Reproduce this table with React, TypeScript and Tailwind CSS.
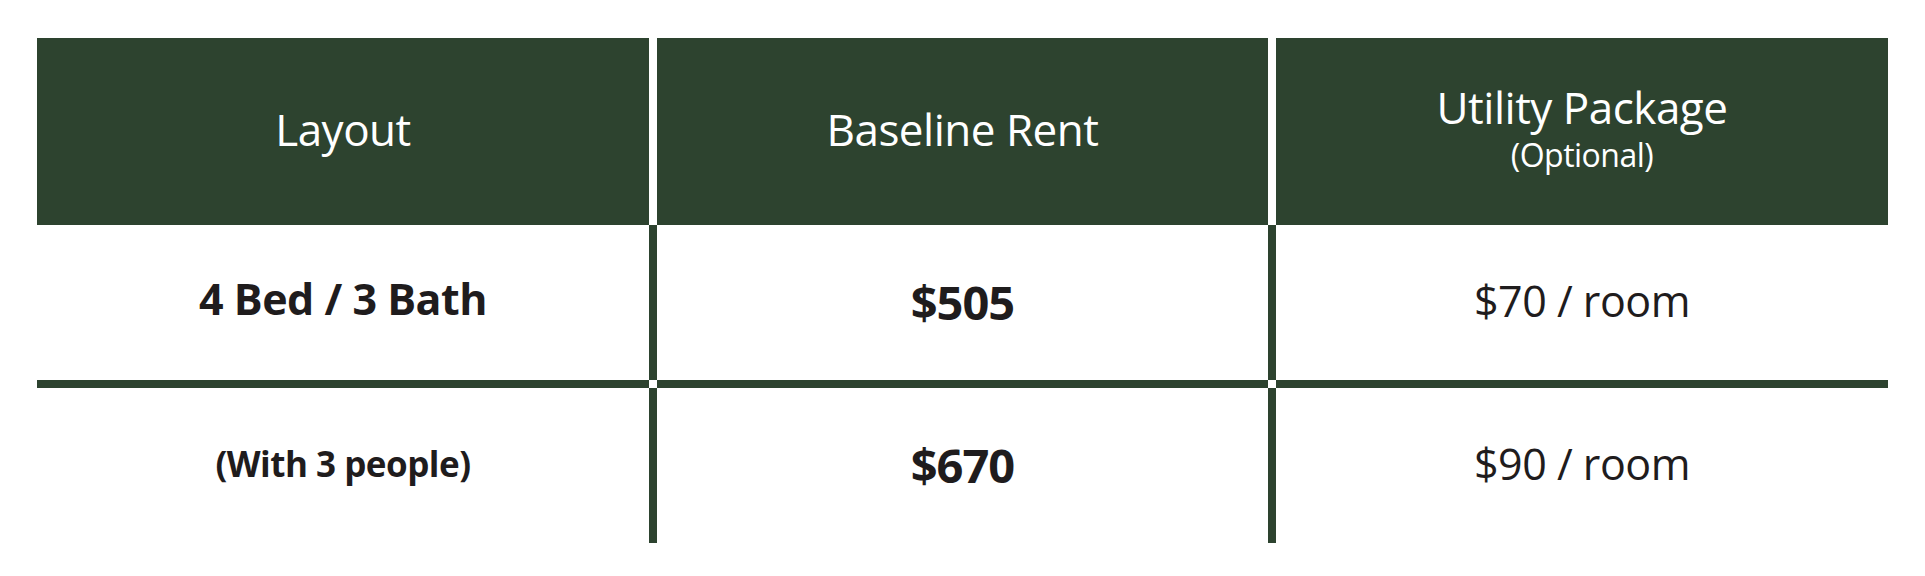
import React from 'react'

const green = 'bg-[#2d432f]'

const rows = [
  { layout: '4 Bed / 3 Bath', layoutSize: 'text-[43px]', rent: '$505', utility: '$70 / room' },
  { layout: '(With 3 people)', layoutSize: 'text-[35px]', rent: '$670', utility: '$90 / room' },
]

const HeaderCell: React.FC<{ children: React.ReactNode }> = ({ children }) => (
  <div className={`${green} text-white flex flex-col items-center justify-center`}>{children}</div>
)

const Cell: React.FC<{ children: React.ReactNode }> = ({ children }) => (
  <div className="flex items-center justify-center text-[#1f1c1d] leading-none">{children}</div>
)

const App: React.FC = () => {
  return (
    <div
      className="w-[1925px] h-[576px] bg-white pt-[38px] pl-[37px]"
      style={{ fontFamily: '"Open Sans", "Noto Sans", sans-serif' }}
    >
      <div className="grid grid-cols-[612px_8px_611px_8px_612px] grid-rows-[187px_155px_8px_155px]">
        {/* header */}
        <HeaderCell>
          <span className="text-[44px] leading-none tracking-[-0.5px] -mt-[6px]">Layout</span>
        </HeaderCell>
        <div />
        <HeaderCell>
          <span className="text-[44px] leading-none tracking-[-0.5px] -mt-[6px]">Baseline Rent</span>
        </HeaderCell>
        <div />
        <HeaderCell>
          <span className="text-[44px] leading-[1.25] tracking-[-0.5px] -mt-[8px]">Utility Package</span>
          <span className="text-[32px] leading-[1.25] tracking-[-0.5px]">(Optional)</span>
        </HeaderCell>

        {rows.map((r, i) => (
          <React.Fragment key={r.rent}>
            {i > 0 && (
              <>
                <div className={green} />
                <div />
                <div className={green} />
                <div />
                <div className={green} />
              </>
            )}
            <Cell>
              <span className={`${r.layoutSize} font-bold tracking-[-0.5px] ${i === 0 ? '-mt-[8px]' : '-mt-[4px]'}`}>
                {r.layout}
              </span>
            </Cell>
            <div className={green} />
            <Cell>
              <span className="text-[47px] font-bold tracking-[-1px]">{r.rent}</span>
            </Cell>
            <div className={green} />
            <Cell>
              <span className="text-[43px] tracking-[-0.5px] -mt-[4px]">{r.utility}</span>
            </Cell>
          </React.Fragment>
        ))}
      </div>
    </div>
  )
}

export default App
